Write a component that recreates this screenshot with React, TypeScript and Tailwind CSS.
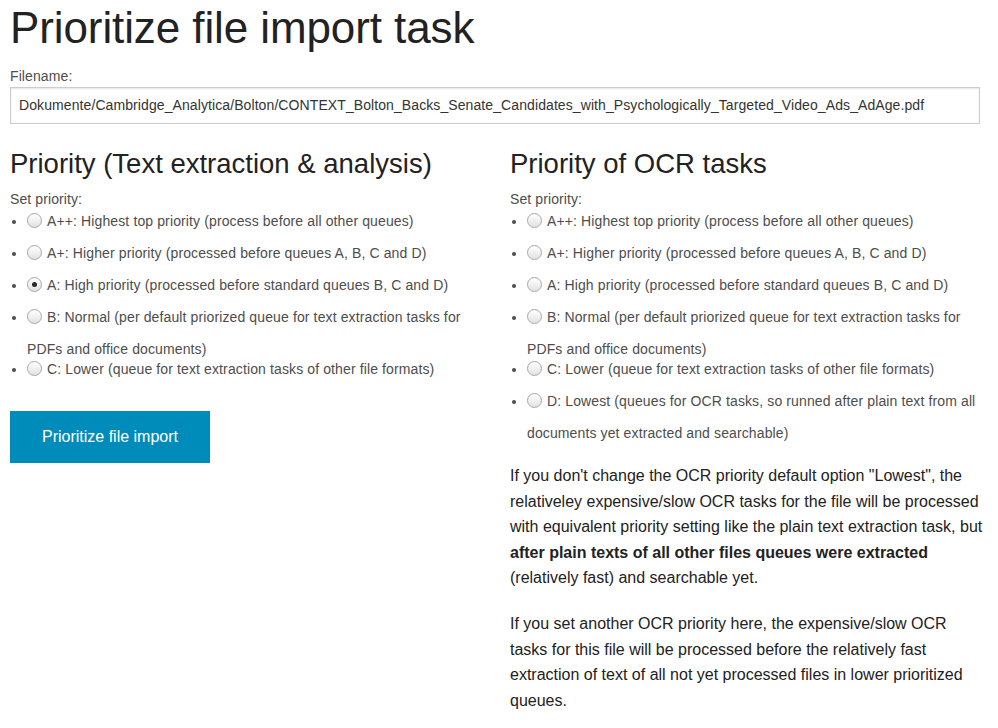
import { useState } from "react";

type Option = { key: string; label: string };

const textOptions: Option[] = [
  { key: "A++", label: "A++: Highest top priority (process before all other queues)" },
  { key: "A+", label: "A+: Higher priority (processed before queues A, B, C and D)" },
  { key: "A", label: "A: High priority (processed before standard queues B, C and D)" },
  { key: "B", label: "B: Normal (per default priorized queue for text extraction tasks for PDFs and office documents)" },
  { key: "C", label: "C: Lower (queue for text extraction tasks of other file formats)" },
];

const ocrOptions: Option[] = [
  ...textOptions,
  { key: "D", label: "D: Lowest (queues for OCR tasks, so runned after plain text from all documents yet extracted and searchable)" },
];

function Radio({ checked }: { checked: boolean }) {
  return (
    <span className="inline-block align-top h-[32px] w-[15px] mr-[5px]">
      <span className="mt-[2px] flex h-[15px] w-[15px] items-center justify-center rounded-full border border-[#a8a8a8] bg-gradient-to-b from-white to-[#e2e2e2]">
        {checked && <span className="h-[5px] w-[5px] rounded-full bg-[#2a2a2a]" />}
      </span>
    </span>
  );
}

function PriorityList({
  options,
  value,
  onChange,
}: {
  options: Option[];
  value: string;
  onChange: (k: string) => void;
}) {
  return (
    <>
      <div className="text-[14px] leading-[20px] tracking-[0.1px] text-[#4d4d4d]">Set priority:</div>
      <ul className="mt-[2px] mb-[20px] ml-[17px] list-disc text-[14px] leading-[20px] tracking-[0.12px] text-[#4d4d4d]">
        {options.map((o) => (
          <li key={o.key} className="cursor-pointer" onClick={() => onChange(o.key)}>
            <Radio checked={value === o.key} />
            {o.label}
          </li>
        ))}
      </ul>
    </>
  );
}

export default function App() {
  const [textPriority, setTextPriority] = useState("A");
  const [ocrPriority, setOcrPriority] = useState("");

  return (
    <div className="w-[980px] pl-[10px] bg-white text-[#222222] font-['Liberation_Sans',Helvetica,Arial,sans-serif]">
      <h1 className="pt-[4px] text-[44px] leading-[48px] tracking-[-0.1px] font-normal">Prioritize file import task</h1>

      <div className="mt-[14px] text-[14px] leading-[20px] tracking-[0.1px] text-[#4d4d4d]">Filename:</div>
      <div className="mt-[1px] flex h-[37px] items-center border border-[#cccccc] bg-white px-[8px] text-[14px] tracking-[0.09px] text-[#333333] shadow-[inset_0_1px_2px_rgba(0,0,0,0.1)]">
        Dokumente/Cambridge_Analytica/Bolton/CONTEXT_Bolton_Backs_Senate_Candidates_with_Psychologically_Targeted_Video_Ads_AdAge.pdf
      </div>

      <div className="mt-[21px] grid grid-cols-2 gap-x-[30px]">
        <div>
          <h3 className="mb-[6px] text-[27.5px] leading-[38px] font-normal">Priority (Text extraction &amp; analysis)</h3>
          <PriorityList options={textOptions} value={textPriority} onChange={setTextPriority} />
          <button className="h-[52px] w-[200px] bg-[#008cba] text-[16px] text-white hover:bg-[#007095]">
            Prioritize file import
          </button>
        </div>

        <div>
          <h3 className="mb-[6px] text-[27.5px] leading-[38px] font-normal">Priority of OCR tasks</h3>
          <PriorityList options={ocrOptions} value={ocrPriority} onChange={setOcrPriority} />
          <p className="mb-[20px] mr-[-6px] text-[16px] leading-[25.6px]">
            If you don't change the OCR priority default option "Lowest", the relativeley expensive/slow OCR tasks for
            the file will be processed with equivalent priority setting like the plain text extraction task, but{" "}
            <strong className="font-bold">after plain texts of all other files queues were extracted</strong> (relatively
            fast) and searchable yet.
          </p>
          <p className="mb-[20px] text-[16px] leading-[25.6px]">
            If you set another OCR priority here, the expensive/slow OCR tasks for this file will be processed before the
            relatively fast extraction of text of all not yet processed files in lower prioritized queues.
          </p>
        </div>
      </div>
    </div>
  );
}
